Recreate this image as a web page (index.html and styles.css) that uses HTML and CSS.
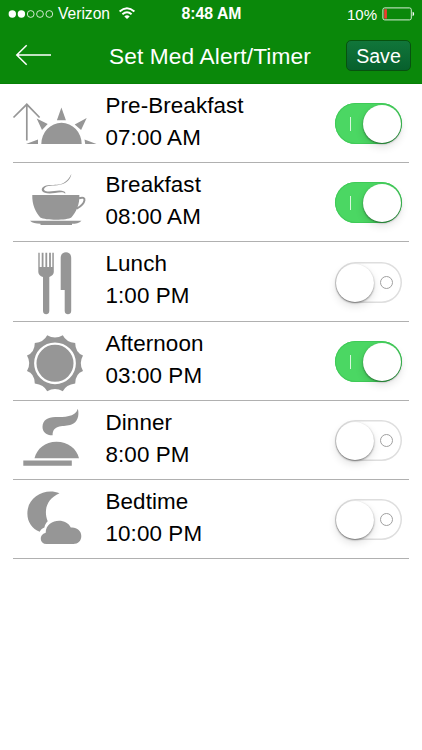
FILE: index.html
```html
<!DOCTYPE html>
<html lang="en">
<head>
<meta charset="utf-8">
<title>Set Med Alert/Timer</title>
<link rel="stylesheet" href="styles.css">
</head>
<body>
<header class="header">
  <div class="status">
    <div class="carrier">
      <svg class="signal" width="47" height="12" viewBox="0 0 47 12"><g fill="#fff"><circle cx="4.3" cy="6" r="3.7"/><circle cx="13.4" cy="6" r="3.7"/></g><g fill="none" stroke="#fff" stroke-width=".8"><circle cx="22.7" cy="6" r="3.4"/><circle cx="32" cy="6" r="3.4"/><circle cx="41.300" cy="6" r="3.4"/></g></svg>
      <span>Verizon</span>
      <svg class="wifi" width="18" height="14" viewBox="0 0 18 14"><g fill="none" stroke="#fff" stroke-width="1.900"><path d="M1.6 5.500Q9-1.200 16.400 5.500M4.400 8.300Q9 4.200 13.600 8.300"/></g><path fill="#fff" d="M6.300 10.400Q9 8.200 11.700 10.400L9 13z"/></svg>
    </div>
    <span class="clock">8:48 AM</span>
    <div class="power">
      <span>10%</span>
      <svg width="33" height="14" viewBox="0 0 33 14"><rect x=".9" y=".9" width="28.4" height="12" rx="1.8" fill="none" stroke="#d8edd8" stroke-width="1"/><path fill="#f23a30" d="M2.200 2.200h2.700v9.400H2.200z"/><path fill="#fff" d="M30.600 4.800c2 .6 2 3.800 0 4.400z"/></svg>
    </div>
  </div>
  <div class="nav">
    <svg class="back" width="36" height="22" viewBox="0 0 36 22" fill="none" stroke="#fff" stroke-width="1.5"><path d="M11.700 1.300 1.800 11l9.900 9.700M1.800 11H36"/></svg>
    <h1 class="title">Set Med Alert/Timer</h1>
    <button class="save">Save</button>
  </div>
</header>
<main class="alerts">
  <section class="row">
    <svg class="icon" viewBox="0 84 92 79"><path d="M26.800 140.500V104.500M13.500 117.500l13.300-13.200 12.800 13.200" fill="none" stroke="#969696" stroke-width="1.700"/><path d="M41.300 144a20.200 21.200 0 0 1 40.400 0zM61.400 107.500l4.500 12.700h-9zM36.700 118.600l11 5.300-5.700 6.100zM86.700 118l-5.600 12-6.400-5.600zM26 144l12-4.600v4.600zM84.500 139.500l12 4.500h-11.300z"/></svg>
    <div class="info"><span>Pre-Breakfast</span><span>07:00 AM</span></div>
    <div class="toggle on"><i class="mark"></i><i class="knob"></i></div>
  </section>
  <section class="row">
    <svg class="icon" viewBox="0 163 92 79"><path d="M32.300 195h47c.7 9-3.500 18-8 22.400-4 3-26 3-31 0-4.500-4.400-8.500-13.400-8-22.400z"/><path d="M79 198.300c8-3 7.300 5-2.300 10.400" fill="none" stroke="#969696" stroke-width="2"/><path d="M30 220.800h51.500c-2 2.500-6 3-9.500 3v1.200H40.500v-1.200c-5 0-8-.8-10.500-3z"/><path d="M71.300 174c-.3 4-3.600 8.300-9.300 10.300-6 2.100-13.500.3-17 3.200-2.700 2.500.6 4 3.500 4 5 .2 10.800-2.300 15.700-.1 1.200.6 1.300 1.200 1 2.400-2-2.300-6.200-1.300-10.200-.7-5.300.8-11.700.7-13-2.300-1.300-3.500 3-5.600 7.500-5.900 5.400-.3 9.600.3 14-2 3.500-1.900 6.100-5 7.800-8.900z"/></svg>
    <div class="info"><span>Breakfast</span><span>08:00 AM</span></div>
    <div class="toggle on"><i class="mark"></i><i class="knob"></i></div>
  </section>
  <section class="row">
    <svg class="icon" viewBox="0 242 92 80"><path d="M38.300 252.700h1.400V267h2v-14.300h1.800V267h1.900v-14.300h1.800V267h1.900v-14.300h1.800V267h1.400v-14.300h1.500v19.300c0 2.300-1.800 4-4.500 5V311c0 4.300-6.300 4.300-6.300 0V277c-3-.9-4.700-2.700-4.700-5z"/><path d="M60.700 258c0-3.700 2.200-5.700 5.300-5.700s5.200 2 5.200 5.700V311c0 4.300-6.500 4.300-6.500 0V290h-4z"/></svg>
    <div class="info"><span>Lunch</span><span>1:00 PM</span></div>
    <div class="toggle"><i class="knob"></i><i class="mark"></i></div>
  </section>
  <section class="row">
    <svg class="icon" viewBox="0 322 92 79"><g transform="translate(55 363.300)"><path d="M7.800-28Q11-21.300 20.200-20.200Q20.300-10.500 28-7.800Q23.500 0 28 7.800Q20.300 10.500 20.200 20.200Q11 21.300 7.800 28Q0 23.500-7.800 28Q-11 21.300-20.200 20.200Q-20.300 10.500-28 7.800Q-23.500 0-28-7.800Q-20.300-10.500-20.200-20.200Q-11-21.300-7.800-28Q0-23.500 7.800-28z"/><circle r="19.700" fill="none" stroke="#fff" stroke-width="2.400"/></g></svg>
    <div class="info"><span>Afternoon</span><span>03:00 PM</span></div>
    <div class="toggle on"><i class="mark"></i><i class="knob"></i></div>
  </section>
  <section class="row">
    <svg class="icon" viewBox="0 401 92 79"><path d="M34.500 458.200c2.500-9.500 10.500-16.500 22-16.500s20.300 7 22.500 16.500zM23.300 460.600h48.500v5.100H23.300zM77.900 408.700c1.600 7.500-.5 13.500-6.400 15.900-7.500 3-18.500-1-18.900 10.700-5.800.2-10.300-3.500-10.100-8.600.3-6.500 5-9.500 12.800-9.700 9-.2 19.600.5 22.600-8.300z"/></svg>
    <div class="info"><span>Dinner</span><span>8:00 PM</span></div>
    <div class="toggle"><i class="knob"></i><i class="mark"></i></div>
  </section>
  <section class="row">
    <svg class="icon" viewBox="0 480 92 79"><path d="M59.500 493.300c-12.500-5.300-29 1.500-31.700 15.700-2 11 3.200 19.500 11.900 22.800 1.200-2.400 2.600-3.500 4.700-4.300.6-2.600 1.600-4.700 3.300-6.200-4.400-11.300-.8-22.600 11.800-28z"/><path d="M46.500 544c-7 0-8-9.500-.8-11.300 0-13.500 20.300-16 25.100-5.100 5.800-.7 10.500 3.100 10.500 8.400 0 4.800-3.200 8-8 8z"/></svg>
    <div class="info"><span>Bedtime</span><span>10:00 PM</span></div>
    <div class="toggle"><i class="knob"></i><i class="mark"></i></div>
  </section>
</main>
</body>
</html>
```
FILE: styles.css
```css
* { box-sizing: border-box; }
body {
  margin: 0;
  background: #fff;
  color: #000;
  font-family: "Liberation Sans", Arial, sans-serif;
}
.header {
  height: 84px;
  background: #0a880a;
  color: #fff;
  border-bottom: 1px solid #078007;
}
.status {
  display: grid;
  grid-template-columns: 1fr auto 1fr;
  height: 28px;
  padding: 0 7px 0 8px;
  align-items: center;
  font-size: 15.6px;
}
.carrier, .power { display: flex; align-items: center; }
.signal { margin-right: 3px; }
.wifi { margin-left: 8px; margin-top: -2px; }
.clock { font-size: 15.8px; font-weight: bold; }
.power { justify-content: flex-end; gap: 5px; font-size: 15px; }
.nav {
  display: flex;
  height: 56px;
  padding: 0 11px 0 15px;
}
.back { margin-top: 16px; }
.title {
  margin: 14px 0 0 58px;
  width: 203px;
  font-size: 22.7px;
  letter-spacing: .12px;
  line-height: 28px;
  font-weight: normal;
  white-space: nowrap;
}
.save {
  margin: 12px 0 0 auto;
  width: 65px;
  height: 31px;
  padding: 0;
  border: 1px solid #07520f;
  border-radius: 5px;
  background: linear-gradient(#11763a, #07602d);
  color: #fff;
  font: 19.6px/28px "Liberation Sans", Arial, sans-serif;
}
.alerts {
  display: grid;
  grid-template-rows: 79px 79px 80px 79px 79px 79px;
  padding: 0 13px;
}
.row {
  display: flex;
  border-bottom: 1px solid #b0b0b0;
}
.icon {
  flex: none;
  width: 92px;
  height: 79px;
  margin-left: -13px;
  overflow: visible;
  fill: #969696;
}
.row:nth-child(3) .icon { height: 80px; }
.info {
  display: flex;
  flex-direction: column;
  margin: 6px 0 0 13.500px;
  font-size: 22.4px;
  letter-spacing: .1px;
  line-height: 32px;
  white-space: nowrap;
}
.toggle {
  display: flex;
  align-items: center;
  justify-content: space-between;
  width: 67px;
  height: 41px;
  margin: 19px 7px 0 auto;
  padding: 0 1px;
  border-radius: 21px;
  background: #fff;
  box-shadow: inset 0 0 0 1.5px #dedede;
}
.row:nth-child(3) .toggle { margin-top: 20px; }
.knob {
  width: 38px;
  height: 38px;
  border-radius: 50%;
  background: #fff;
  box-shadow: 0 1px 2px rgba(0, 0, 0, .45), 0 4px 8px rgba(0, 0, 0, .12);
}
.mark {
  width: 13px;
  height: 13px;
  margin-right: 8px;
  border: 1.5px solid #a0a0a0;
  border-radius: 50%;
}
.on { background: #4bd763; box-shadow: inset 0 0 0 1px #40ca58; }
.on .mark {
  width: 1px;
  height: 14px;
  margin: 0 0 0 14px;
  border: 0;
  border-radius: 0;
  background: #d8f7dd;
}
```
